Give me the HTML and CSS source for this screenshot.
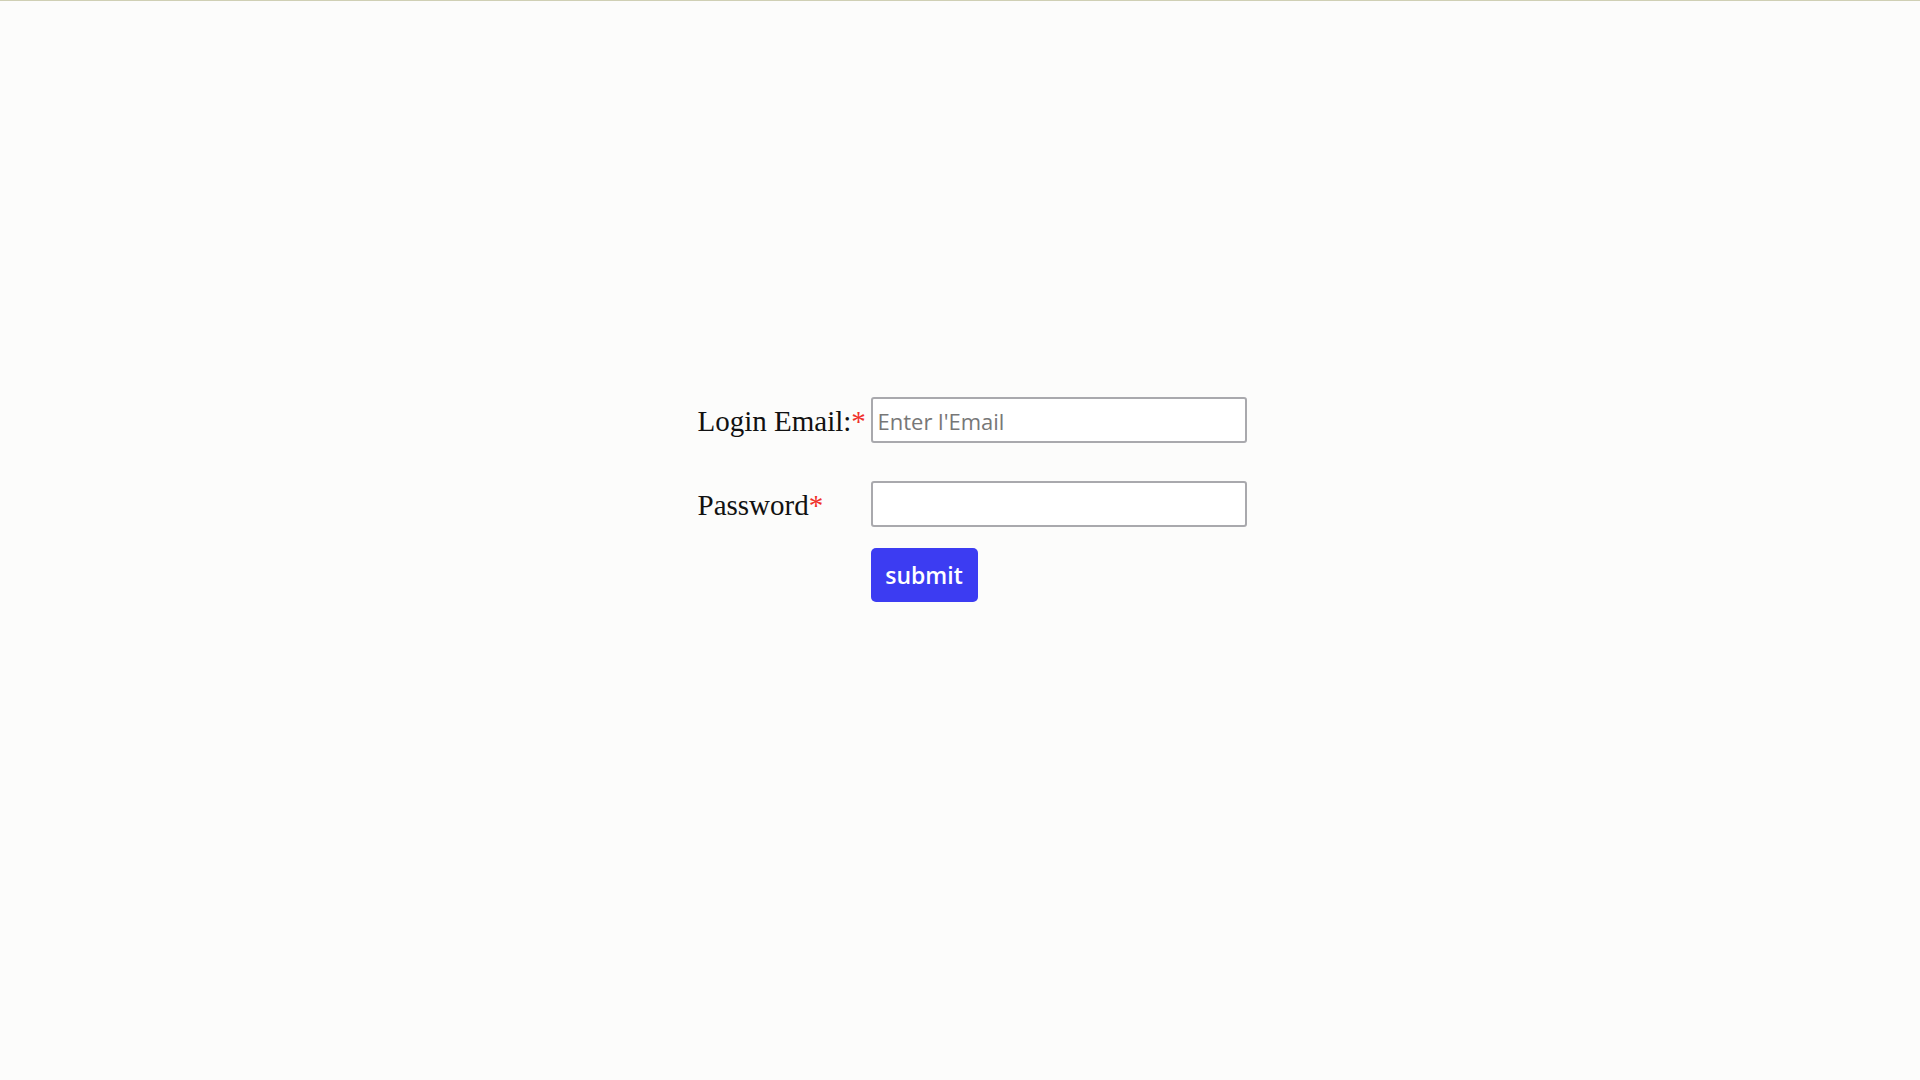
FILE: index.html
```html
<!DOCTYPE html>
<html lang="fr">
<head>
<meta charset="utf-8">
<title>Login</title>
<link rel="stylesheet" href="styles.css">
</head>
<body>
<div class="page">
  <form class="login-form">
    <label class="field-label" for="email">Login Email:<span class="req">*</span></label>
    <input class="field-input" id="email" type="email" placeholder="Enter l'Email">
    <label class="field-label" for="pwd">Password<span class="req">*</span></label>
    <input class="field-input" id="pwd" type="password">
    <span class="spacer"></span>
    <div class="actions"><button class="submit-btn" type="button">submit</button></div>
  </form>
</div>
</body>
</html>
```
FILE: styles.css
```css
html, body {
  margin: 0;
  padding: 0;
  background: #fcfcfb;
}
body {
  border-top: 1px solid #cfcfb4;
  min-height: 1079px;
  font-family: "Liberation Serif", "Times New Roman", serif;
  color: #111;
}
.page {
  display: flex;
  justify-content: center;
  padding-top: 396px;
  padding-left: 24px;
}
.login-form {
  display: grid;
  grid-template-columns: 173px 376px;
  grid-auto-rows: auto;
  row-gap: 38px;
  align-items: center;
}
.field-label {
  font-size: 29px;
  line-height: 1;
  padding-top: 3px;
  white-space: nowrap;
}
.req {
  color: #f0302a;
}
.field-input {
  box-sizing: border-box;
  width: 376px;
  height: 46px;
  margin: 0;
  border: 2px solid #a9a9ad;
  border-radius: 3px;
  background: #fff;
  padding: 2px 5px 0;
  font-family: "Open Sans", "Noto Sans", sans-serif;
  font-size: 22px;
  color: #222;
}
.field-input::placeholder {
  color: #777;
}
.spacer {
  display: block;
}
.actions {
  margin-top: -17px;
}
.submit-btn {
  box-sizing: border-box;
  width: 107px;
  height: 54px;
  border: none;
  border-radius: 5px;
  background: #3c3cf2;
  color: #fff;
  font-family: "Open Sans", "Noto Sans", sans-serif;
  font-size: 23px;
  font-weight: 600;
  padding: 0;
  cursor: pointer;
}
```
